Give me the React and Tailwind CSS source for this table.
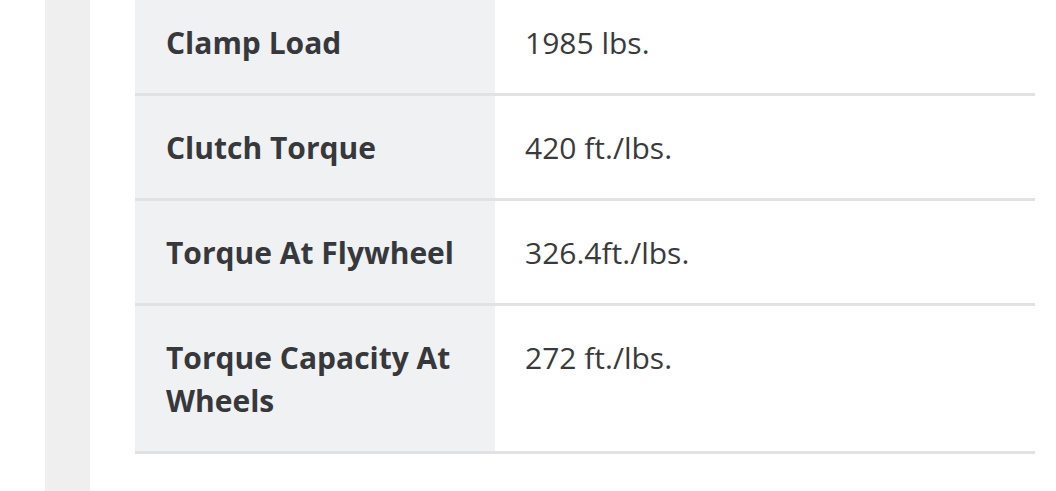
export default function App() {
  const rows = [
    ["Clamp Load", "1985 lbs."],
    ["Clutch Torque", "420 ft./lbs."],
    ["Torque At Flywheel", "326.4ft./lbs."],
    ["Torque Capacity At Wheels", "272 ft./lbs."],
  ];
  return (
    <div
      className="w-[1056px] h-[491px] bg-white flex overflow-hidden"
      style={{ fontFamily: '"Open Sans", sans-serif' }}
    >
      <div className="ml-[45px] w-[45px] h-full bg-[#efefef] shrink-0" />
      <div className="ml-[45px] w-[900px] -mt-[9px]">
        {rows.map(([label, value]) => (
          <div key={label} className="flex border-b-[3px] border-[#e2e2e2]">
            <div className="w-[360px] shrink-0 bg-[#f0f1f3] pl-[31px] pr-[30px] pt-[30px] pb-[29px] text-[30px] leading-[43px] font-bold text-[#37383c]">
              {label}
            </div>
            <div className="flex-1 pl-[30px] pt-[30px] pb-[29px] text-[30px] leading-[43px] text-[#3a3a3c]">
              {value}
            </div>
          </div>
        ))}
      </div>
    </div>
  );
}
